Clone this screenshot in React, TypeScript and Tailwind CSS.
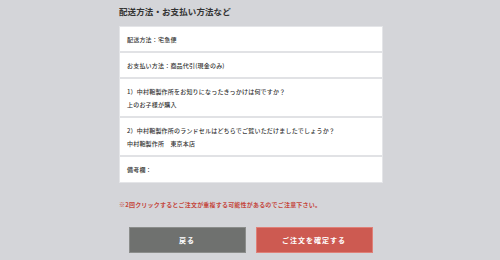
const rows = [
  { lines: ["配送方法：宅急便"] },
  { lines: ["お支払い方法：商品代引(現金のみ)"] },
  { lines: ["1）中村鞄製作所をお知りになったきっかけは何ですか？", "上のお子様が購入"] },
  { lines: ["2）中村鞄製作所のランドセルはどちらでご覧いただけましたでしょうか？", "中村鞄製作所　東京本店"] },
  { lines: ["備考欄："] },
];

const App = () => {
  return (
    <div
      className="w-[500px] h-[260px] bg-[#d4d5d9] overflow-hidden text-[#333]"
      style={{ fontFamily: '"Noto Sans CJK JP", "Noto Sans", sans-serif' }}
    >
      <div className="w-[264px] ml-[119px] pt-[5px]">
        <h2 className="text-[8.5px] leading-[12px] font-bold tracking-[0.1px]">配送方法・お支払い方法など</h2>
        <div className="mt-[9px] bg-white border border-[#e4e5e8]">
          {rows.map((row, i) => (
            <div
              key={i}
              className={
                i < rows.length - 1
                  ? "px-[7px] py-[5.5px] border-b-2 border-[#e1e2e5]"
                  : "px-[7px] py-[6px]"
              }
            >
              {row.lines.map((line) => (
                <p key={line} className="text-[6px] leading-[13px] font-medium tracking-[0.2px]">
                  {line}
                </p>
              ))}
            </div>
          ))}
        </div>
        <p className="mt-[16px] text-[6px] leading-[12px] font-bold text-[#c4473d] tracking-[0.2px]">
          ※2回クリックするとご注文が重複する可能性があるのでご注意下さい。
        </p>
      </div>
      <div className="flex justify-center gap-[10px] mt-[16px] pl-[1px]">
        <button className="w-[117px] h-[26px] bg-[#6f716f] border border-[#8b8d8b] text-white text-[7px] font-bold tracking-[1px]">
          戻る
        </button>
        <button className="w-[117px] h-[26px] bg-[#cd5a51] border border-[#df8078] text-white text-[7px] font-bold tracking-[1px]">
          ご注文を確定する
        </button>
      </div>
    </div>
  );
};

export default App;
